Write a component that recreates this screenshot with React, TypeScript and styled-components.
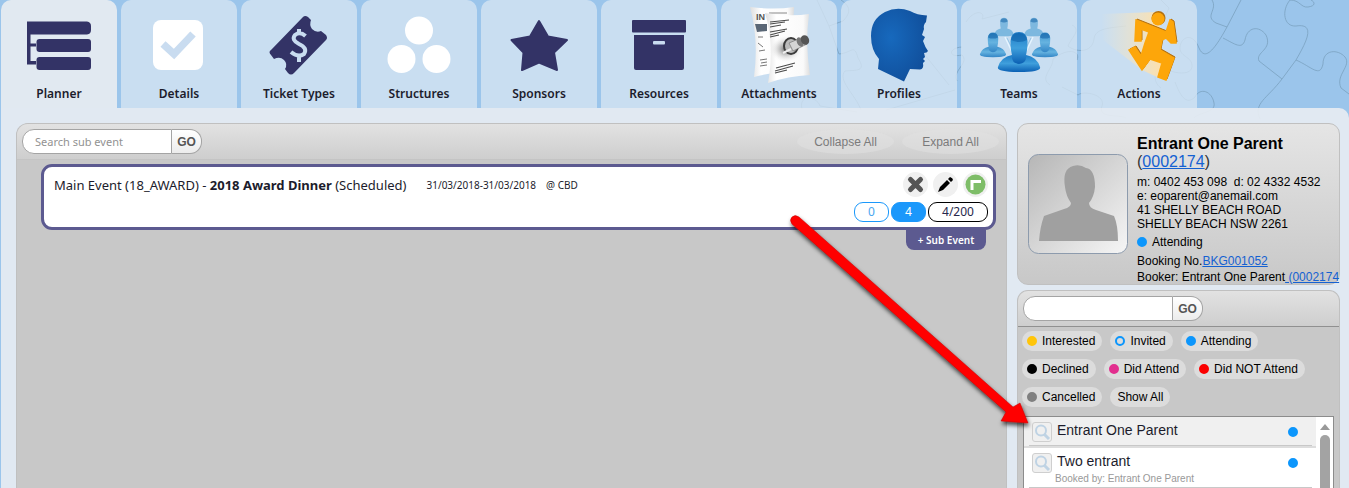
import React from 'react';
import styled, { createGlobalStyle } from 'styled-components';

const uiFont = `'Noto Sans', 'Open Sans', sans-serif`;
const textFont = `'Liberation Sans', Arial, sans-serif`;

const Global = createGlobalStyle`
  *, *::before, *::after { box-sizing: border-box; }
  body { margin: 0; font-family: ${textFont}; font-size: 12px; color: #000; }
  ul { list-style: none; margin: 0; padding: 0; }
  h2, p { margin: 0; }
  button, input { font: inherit; color: inherit; margin: 0; }
  button { cursor: pointer; }
`;

const Page = styled.div`
  position: relative;
  display: flex;
  flex-direction: column;
  height: 100vh;
  overflow: hidden;
  padding-left: 1px;
  background: #9bc5eb;
`;

const Backdrop = styled.svg`
  position: absolute;
  top: 0;
  right: 0;
`;

const TabBar = styled.nav`
  position: relative;
  display: flex;
  gap: 4px;
`;

const Tab = styled.a<{ $active?: boolean }>`
  display: flex;
  flex-direction: column;
  align-items: center;
  width: 116px;
  height: 108px;
  border-radius: 10px 10px 0 0;
  background: ${(p) => (p.$active ? '#e1e9f1' : 'rgba(216, 230, 243, 0.76)')};
  color: #1c1c2c;
  font: 600 12px/20px ${uiFont};
  text-decoration: none;
  svg { width: 100px; height: 84px; }
`;

const Body = styled.main`
  position: relative;
  display: flex;
  flex: 1;
  min-height: 0;
  gap: 10px;
  padding: 15px 9px 0 15px;
  border-radius: 0 10px 0 0;
  background: rgba(230, 236, 242, 0.93);
`;

const Planner = styled.section`
  flex: 1;
  min-width: 0;
  border: 1px solid #c0c0c0;
  border-bottom: 0;
  border-radius: 12px 12px 0 0;
  background: #c8c8c8;
  overflow: hidden;
`;

const PanelBar = styled.div<{ $line: string }>`
  display: flex;
  align-items: center;
  justify-content: space-between;
  flex: none;
  height: 36px;
  padding: 0 5px;
  border-bottom: 1px solid ${(p) => p.$line};
  background: linear-gradient(#e2e2e2, #cecece);
`;

const Search = styled.form`
  display: flex;
  height: 25px;
`;

const SearchInput = styled.input`
  width: 150px;
  padding: 0 12px;
  border: 1px solid #a4a4a4;
  border-radius: 12px 0 0 12px;
  background: #fff;
  font: 11px ${uiFont};
  outline: 0;
  &::placeholder { color: #929292; opacity: 1; }
`;

const GoButton = styled.button`
  width: 30px;
  padding: 0;
  border: 1px solid #a4a4a4;
  border-left: 0;
  border-radius: 0 12px 12px 0;
  background: linear-gradient(#fff, #ececec);
  color: #555;
  font: bold 12px ${textFont};
`;

const Links = styled.div`
  display: flex;
  gap: 8px;
  padding-right: 2px;
`;

const SoftButton = styled.button`
  width: 97px;
  height: 25px;
  padding: 0;
  border: 0;
  border-radius: 50%;
  background: rgba(225, 225, 225, 0.5);
  color: #7b7b7b;
  font-size: 12px;
`;

const EventArea = styled.div`
  padding: 4px 10px 0 24px;
`;

const EventCard = styled.article`
  display: flex;
  justify-content: space-between;
  height: 66px;
  padding: 5px 5px 0 10px;
  border: 3px solid #5c5a90;
  border-radius: 11px;
  background: #fff;
  color: #1c1c2c;
  font: 12px/16px ${uiFont};
`;

const EventTitle = styled.div`
  display: flex;
  gap: 20px;
  height: 26px;
  align-items: center;
  font-size: 13px;
  white-space: nowrap;
`;

const EventDetail = styled.div`
  display: flex;
  gap: 10px;
  font-size: 10px;
`;

const EventSide = styled.div`
  display: flex;
  flex-direction: column;
  align-items: flex-end;
  gap: 5px;
`;

const Row = styled.div<{ $gap: number }>`
  display: flex;
  gap: ${(p) => p.$gap}px;
`;

const RoundButton = styled.button`
  display: block;
  width: 25px;
  height: 25px;
  padding: 0;
  border: 0;
  border-radius: 50%;
  background: #f0f0f0;
  svg { display: block; }
`;

const Count = styled.span<{ $tone: 'empty' | 'full' | 'total' }>`
  width: ${(p) => (p.$tone === 'total' ? 60 : 35)}px;
  height: 20px;
  border: 1px solid ${(p) => (p.$tone === 'total' ? '#000' : '#1b98fb')};
  border-radius: 9px;
  background: ${(p) => (p.$tone === 'full' ? '#1b98fb' : '#fff')};
  color: ${(p) => ({ empty: '#4ba6f0', full: '#fff', total: '#28284c' })[p.$tone]};
  line-height: 18px;
  text-align: center;
`;

const SubEvent = styled.button`
  display: block;
  width: 80px;
  height: 20px;
  margin: 0 10px 0 auto;
  padding: 0;
  border: 0;
  border-radius: 0 0 8px 8px;
  background: #5c5a90;
  color: #fff;
  font: 600 10px/20px ${uiFont};
`;

const Sidebar = styled.aside`
  display: flex;
  flex-direction: column;
  flex: 0 0 323px;
  min-width: 0;
  gap: 5px;
`;

const Profile = styled.section`
  display: flex;
  flex: 0 0 161px;
  gap: 9px;
  padding: 10px 0 0 10px;
  border: 1px solid #c0c0c0;
  border-radius: 11px;
  background: linear-gradient(#e5e5e5, #c8c8c8);
`;

const Avatar = styled.svg`
  flex: none;
  margin-top: 20px;
`;

const ProfileText = styled.div`
  font-size: 12px;
  line-height: 14px;
  white-space: nowrap;
  a { color: #1461d2; }
`;

const ProfileName = styled.h2`
  font-size: 16px;
  line-height: 20px;
`;

const ProfileId = styled.p`
  margin-bottom: 5px;
  font-size: 16px;
  line-height: 16px;
  color: #333;
`;

const BookLine = styled.p`
  margin-top: 2px;
`;

const Status = styled.p`
  display: flex;
  align-items: center;
  gap: 5px;
  margin: 4px 0 5px;
`;

const Dot = styled.i<{ $color: string; $ring?: boolean }>`
  flex: none;
  width: 10px;
  height: 10px;
  border-radius: 50%;
  border: ${(p) => (p.$ring ? 2 : 5)}px solid ${(p) => p.$color};
`;

const Entrants = styled.section`
  display: flex;
  flex: 1;
  flex-direction: column;
  min-height: 0;
  border: 1px solid #c0c0c0;
  border-bottom: 0;
  border-radius: 11px 11px 0 0;
  background: #c8c8c8;
  overflow: hidden;
`;

const Filters = styled.div`
  display: flex;
  flex-wrap: wrap;
  gap: 8px;
  padding: 4px 10px 9px 4px;
`;

const Filter = styled.button`
  display: flex;
  align-items: center;
  gap: 5px;
  height: 20px;
  padding: 0 7px 0 5px;
  border: 0;
  border-radius: 10px;
  background: #dcdcdc;
  font-size: 12px;
  &:last-child { padding-left: 7px; }
`;

const ListBox = styled.div`
  display: flex;
  flex: 1;
  min-height: 0;
  margin: 0 5px;
  border: 1px solid #8c8c8c;
  border-bottom: 0;
  background: #fff;
`;

const List = styled.ul`
  flex: 1;
`;

const Entrant = styled.li<{ $selected?: boolean }>`
  height: ${(p) => (p.$selected ? 31 : 40)}px;
  padding: 0 4px 0 5px;
  background: ${(p) => (p.$selected ? '#f0f0f0' : '#fff')};
  border-bottom: ${(p) => (p.$selected ? '2px solid #ddd' : '0')};
`;

const EntrantInner = styled.div`
  height: 100%;
  border-bottom: 1px solid #c8c8c8;
`;

const EntrantLine = styled.div`
  display: flex;
  align-items: center;
  gap: 5px;
  height: 29px;
  padding: 0 14px 0 3px;
  color: #1c1c2c;
  font-size: 14px;
  span { flex: 1; padding-bottom: 3px; }
`;

const Lens = styled.button`
  width: 20px;
  height: 20px;
  padding: 0;
  border: 1px solid #cfcfcf;
  border-radius: 3px;
  background: #f0f0f0;
  svg { display: block; }
`;

const BookedBy = styled.p`
  margin-top: -3px;
  padding-left: 26px;
  color: #999;
  font-size: 10px;
  line-height: 10px;
`;

const Track = styled.div`
  display: flex;
  flex-direction: column;
  align-items: center;
  gap: 5px;
  width: 17px;
  padding-top: 7px;
`;

const Thumb = styled.div`
  flex: 1;
  width: 10px;
  border-radius: 5px 5px 0 0;
  background: #a3a3a3;
`;

const Pointer = styled.svg`
  position: absolute;
  top: 100px;
  right: 309px;
  pointer-events: none;
`;

const navy = '#333366';

const PlannerIcon = () => (
  <svg viewBox="0 0 100 84" fill={navy}>
    <path d="M18 21.500H78Q82 22 82 26V30Q82 34 78 34.500H21.500V43.500H27V46.500H21.500V61H27V64.500H18Z" />
    <rect x="27.500" y="39" width="54.500" height="13" rx="3" />
    <rect x="27.500" y="57" width="54.500" height="13" rx="3" />
  </svg>
);

const DetailsIcon = () => (
  <svg viewBox="0 0 100 84">
    <rect x="24" y="20" width="50" height="50" rx="8" fill="#fff" />
    <path d="M34 44L45 54L64 34" fill="none" stroke="#c9dcf0" strokeWidth="7.500" />
  </svg>
);

const TicketIcon = () => (
  <svg viewBox="0 0 100 84">
    <path d="M54 17Q56 15 59 17L62 20Q60 25 63 29Q67 33 72 31L77 35Q79 38 77 40L45 73Q42 76 39 73L36 69Q39 64 35 60Q31 56 25 59L22 55Q19 52 22 50Z" fill={navy} />
    <path d="M56.500 36Q51 31 46 35Q42 40 50 44Q59 48 55 54Q49 58 42 52M50 29V34M50 56V62" fill="none" stroke="#c9dcf0" strokeWidth="4" />
  </svg>
);

const StructuresIcon = () => (
  <svg viewBox="0 0 100 84" fill="#fff">
    <circle cx="50" cy="30.500" r="14" />
    <circle cx="32.500" cy="59" r="14" />
    <circle cx="67.500" cy="59" r="14" />
  </svg>
);

const SponsorsIcon = () => (
  <svg viewBox="0 0 100 84" fill={navy} stroke={navy} strokeWidth="2" strokeLinejoin="round">
    <path d="M50 21L59 36.500L78 40L65 52.500L68 70L50 62.500L33 70L34.500 52.500L22.500 40L41 36.500Z" />
  </svg>
);

const ResourcesIcon = () => (
  <svg viewBox="0 0 100 84" fill={navy}>
    <rect x="23" y="20" width="54" height="12.500" rx="1" />
    <path d="M25 35H75V68Q75 70 73 70H27Q25 70 25 68Z" />
    <rect x="44" y="41" width="12" height="3.500" rx="1" fill="#c9dcf0" />
  </svg>
);

const AttachmentsIcon = () => (
  <svg viewBox="0 0 100 84">
    <defs>
      <linearGradient id="sheet"><stop stopColor="#dedede" /><stop offset=".25" stopColor="#fff" /><stop offset=".85" stopColor="#fafafa" /><stop offset="1" stopColor="#ddd" /></linearGradient>
      <radialGradient id="shade"><stop stopColor="#666" /><stop offset="1" stopColor="#fff" stopOpacity="0" /></radialGradient>
    </defs>
    <path d="M21 7Q45 10 65 7Q63 40 65 70Q45 72 25 77Q30 40 21 7Z" fill="url(#sheet)" />
    <text x="27" y="20" fontSize="9" fontWeight="700" fontFamily="Liberation Sans" fill="#555">IN</text>
    <path d="M40 13H58" stroke="#888" />
    <path d="M26 24H38V31L28 32Z" fill="#596675" />
    <path d="M29 37H34M29 43L34 47M30 51L36 50M31 60L38 59M32 63L38 62M31 66L38 65" stroke="#777" />
    <path d="M36 13Q62 17 80 14Q76 43 81 75Q59 76 39 83Q46 45 36 13Z" fill="url(#sheet)" />
    <path d="M41 22L60 20M41 24L56 22M41 27L52 25M41 32L58 29M41 35L56 31M41 37L50 35M47 68L66 63M46 71L64 66M46 73L58 70" stroke="#4c4c4c" strokeWidth="1.200" />
    <ellipse cx="57" cy="49" rx="17" ry="14" fill="url(#shade)" />
    <ellipse cx="62" cy="46" rx="7" ry="8" fill="#bbb" stroke="#3c3c3c" strokeWidth="2" />
    <path d="M60 43L74 37L78 44L64 51Z" fill="#d5d5d5" stroke="#777" strokeWidth=".7" />
    <ellipse cx="71" cy="42" rx="3" ry="5" fill="#777" transform="rotate(-25 71 42)" />
    <ellipse cx="76" cy="40" rx="4" ry="5" fill="#555" transform="rotate(-25 76 40)" />
    <path d="M62 49L54 53" stroke="#eee" strokeWidth="2" />
  </svg>
);

const ProfilesIcon = () => (
  <svg viewBox="0 0 100 84">
    <defs><radialGradient id="head" cx=".35" cy=".4" r=".7"><stop stopColor="#1769bd" /><stop offset="1" stopColor="#104e9a" /></radialGradient></defs>
    <path d="M29 69L30 59Q22 50 22 36Q22 19 36 12Q48 6 61 11Q68 15 78 15.500L77 22Q74 25 75 29L73 35L76 37L74 41Q76 47 79 51Q78 53 75 53L76 57L74 59L76 61L74 63Q75 69 71 69.500L61 69L55 81.500Z" fill="url(#head)" />
  </svg>
);

const Person = ({ x, y, s, fill }: { x: number; y: number; s: number; fill: string }) => (
  <g transform={`translate(${x} ${y}) scale(${s})`}>
    <path d="M-7 14Q-18 16-21 26Q-23 31 0 31Q23 31 21 26Q18 16 7 14Z" fill={fill} />
    <path d="M-8.500 0Q-8-9 0-9Q8-9 8.500 0Q8.500 9 7 14Q8 22 0 23Q-8 22-7 14Q-8.500 9-8.500 0Z" fill={fill} />
    <path d="M-8-1Q-7-8 0-8Q7-8 8-1Q0 3-8-1Z" fill="#0758a0" opacity=".5" />
  </g>
);

const TeamsIcon = () => (
  <svg viewBox="0 0 100 84">
    <defs>
      <linearGradient id="body" x2="0" y2="1"><stop stopColor="#1f7cc6" /><stop offset=".5" stopColor="#3f9fdc" /><stop offset="1" stopColor="#0a5fb3" /></linearGradient>
      <linearGradient id="side" x2="0" y2="1"><stop stopColor="#3a8fcb" /><stop offset=".5" stopColor="#66b3e0" /><stop offset="1" stopColor="#3285c6" /></linearGradient>
    </defs>
    <Person x={35} y={22} s={0.46} fill="#7db8df" />
    <Person x={65} y={22} s={0.46} fill="#7db8df" />
    <path d="M36 37L46 58M64 37L54 58" stroke="#e5f4ff" strokeWidth="1.500" />
    <path d="M38 38L47 56M62 38L53 56" stroke="#7db8df" strokeWidth=".7" />
    <Person x={24} y={38} s={0.62} fill="url(#side)" />
    <Person x={76} y={38} s={0.62} fill="url(#side)" />
    <Person x={50} y={41} s={1} fill="url(#body)" />
  </svg>
);

const runner = 'M47 20L77 32L81 20L84 22L87 43L82 43L77 38L73 40L71 50L85 58L77 80L69 77L73 63L61 59L53 70L40 50L46 47L52 56L56 43L60 32L52 29L52 41L46 41Z';

const ActionsIcon = () => (
  <svg viewBox="0 0 100 84">
    <defs><linearGradient id="trail"><stop stopColor="#ffe9c0" stopOpacity="0" /><stop offset="1" stopColor="#ffe0a8" /></linearGradient></defs>
    <path d="M12 14L69 12L75 66L68 77L53 70L14 40Z" fill="url(#trail)" />
    <path fill="#b37010" stroke="#b37010" transform="translate(1 -1)" d={runner} />
    <path fill="#fda60a" stroke="#fda60a" strokeWidth="1.500" d={runner} />
    <circle cx="69.500" cy="18" r="7" fill="#b37010" />
    <circle cx="69" cy="19" r="6.500" fill="#fda60a" />
  </svg>
);

const tabs: [string, () => React.ReactElement][] = [
  ['Planner', PlannerIcon],
  ['Details', DetailsIcon],
  ['Ticket Types', TicketIcon],
  ['Structures', StructuresIcon],
  ['Sponsors', SponsorsIcon],
  ['Resources', ResourcesIcon],
  ['Attachments', AttachmentsIcon],
  ['Profiles', ProfilesIcon],
  ['Teams', TeamsIcon],
  ['Actions', ActionsIcon],
];

const filters = [
  ['Interested', '#ffc50a'],
  ['Invited', '#0c96fc'],
  ['Attending', '#0c96fc'],
  ['Declined', '#000'],
  ['Did Attend', '#e22e8e'],
  ['Did NOT Attend', '#fb0000'],
  ['Cancelled', '#808080'],
  ['Show All', ''],
];

const LensIcon = () => (
  <svg width="18" height="18" fill="none" stroke="#bfd3e4" strokeWidth="2">
    <circle cx="8" cy="7.500" r="5" />
    <path d="M11 11L16 16" strokeWidth="3" />
  </svg>
);

export default function App() {
  return (
    <Page>
      <Global />
      <Backdrop width="560" height="150" viewBox="789 0 560 150" fill="none" stroke="#789fbc" strokeOpacity=".75">
        <path d="M1212 0C1218 10 1204 16 1216 23L1227 27L1241 0M1227 27C1215 49 1205 62 1199 48C1194 35 1185 35 1181 43C1176 57 1191 55 1192 65C1193 77 1172 74 1160 66C1152 75 1155 84 1161 88" />
        <path d="M1223 38C1235 44 1242 50 1245 40C1247 27 1259 25 1266 35C1273 50 1255 52 1259 61L1282 79L1296 60M1290 0C1281 11 1284 27 1296 26C1316 23 1307 41 1296 60C1312 67 1320 78 1323 64C1323 49 1338 49 1345 57C1352 66 1335 75 1341 88L1349 94M1282 79C1267 99 1253 103 1260 119" />
        <path d="M1290 0C1300 0 1301 8 1308 7C1316 6 1315 2 1311 0M1175 82C1180 95 1186 106 1195 97C1200 87 1212 91 1214 103C1216 113 1199 112 1194 118" />
        <path d="M1161 0L1169 8L1161 26M1072 25C1082 30 1071 38 1068 46C1075 52 1092 54 1094 39C1095 28 1110 28 1126 26M1062 87L1078 95C1084 90 1106 95 1102 106C1097 119 1120 114 1126 118" />
        <path d="M817 0L829 26L843 21C855 9 845 3 841 0M829 26L839 54C852 53 854 43 858 58C867 72 856 70 845 71C837 80 855 94 861 110M917 45L949 85M886 110L955 90M957 81C952 70 970 63 962 55C948 58 948 48 962 47" />
        <path d="M966 22C975 8 986 12 982 19L1009 12M1050 85C1039 78 1053 69 1053 59C1068 47 1081 51 1077 60M802 109C798 94 817 96 820 106L857 112" />
      </Backdrop>
      <TabBar>
        {tabs.map(([label, Icon], i) => (
          <Tab key={label} href="#" $active={i === 0}>
            <Icon />
            {label}
          </Tab>
        ))}
      </TabBar>
      <Body>
        <Planner>
          <PanelBar $line="#c4c4c4">
            <Search>
              <SearchInput aria-label="Search sub event" placeholder="Search sub event" />
              <GoButton type="button">GO</GoButton>
            </Search>
            <Links>
              <SoftButton>Collapse All</SoftButton>
              <SoftButton>Expand All</SoftButton>
            </Links>
          </PanelBar>
          <EventArea>
            <EventCard>
              <EventTitle>
                <span>Main Event (18_AWARD) - <b>2018 Award Dinner</b> (Scheduled)</span>
                <EventDetail>
                  <span>31/03/2018-31/03/2018</span>
                  <span>@ CBD</span>
                </EventDetail>
              </EventTitle>
              <EventSide>
                <Row $gap={5}>
                  <RoundButton aria-label="Delete">
                    <svg width="25" height="25" stroke="#555" strokeWidth="5" strokeLinecap="round"><path d="M7.500 7.500L17.500 17.500M17.500 7.500L7.500 17.500" /></svg>
                  </RoundButton>
                  <RoundButton aria-label="Edit">
                    <svg width="25" height="25"><path d="M5 20L7 15L14 8L17 11L10 18ZM15 7L17 5Q20 6 20 8L18 10Z" /></svg>
                  </RoundButton>
                  <RoundButton aria-label="Expand">
                    <svg width="25" height="25"><circle cx="12.500" cy="12.500" r="10" fill="#7ebd68" /><path d="M9 18V9.500H18" fill="none" stroke="#fff" strokeWidth="3" /></svg>
                  </RoundButton>
                </Row>
                <Row $gap={2}>
                  <Count $tone="empty">0</Count>
                  <Count $tone="full">4</Count>
                  <Count $tone="total">4/200</Count>
                </Row>
              </EventSide>
            </EventCard>
            <SubEvent>+ Sub Event</SubEvent>
          </EventArea>
        </Planner>
        <Sidebar>
          <Profile>
            <Avatar width="100" height="100">
              <defs><linearGradient id="avatar" x2="1" y2="1"><stop stopColor="#b6b6b6" /><stop offset="1" stopColor="#f6f6f6" /></linearGradient></defs>
              <rect x=".5" y=".5" width="99" height="99" rx="10" fill="url(#avatar)" stroke="#8d9bad" />
              <path d="M11 87Q12 73 16 62L36 55Q43 53 43 49Q38 42 37 33Q34 15 45 12Q52 10 58 14Q67 15 67 33Q66 43 61 49Q61 54 68 56L86 62Q90 71 90 87Z" fill="#a0a0a0" />
            </Avatar>
            <ProfileText>
              <ProfileName>Entrant One Parent</ProfileName>
              <ProfileId>(<a href="#">0002174</a>)</ProfileId>
              <p>m: 0402 453 098&nbsp; d: 02 4332 4532</p>
              <p>e: eoparent@anemail.com</p>
              <p>41 SHELLY BEACH ROAD</p>
              <p>SHELLY BEACH NSW 2261</p>
              <Status><Dot $color="#0c96fc" />Attending</Status>
              <BookLine>Booking No.<a href="#">BKG001052</a></BookLine>
              <BookLine>Booker: Entrant One Parent<a href="#">&nbsp;(0002174</a></BookLine>
            </ProfileText>
          </Profile>
          <Entrants>
            <PanelBar $line="#909090">
              <Search>
                <SearchInput aria-label="Search entrants" />
                <GoButton type="button">GO</GoButton>
              </Search>
            </PanelBar>
            <Filters>
              {filters.map(([label, color]) => (
                <Filter key={label}>
                  {color && <Dot $color={color} $ring={label === 'Invited'} />}
                  {label}
                </Filter>
              ))}
            </Filters>
            <ListBox>
              <List>
                <Entrant $selected>
                  <EntrantInner>
                    <EntrantLine>
                      <Lens aria-label="View Entrant One Parent"><LensIcon /></Lens>
                      <span>Entrant One Parent</span>
                      <Dot $color="#0c96fc" />
                    </EntrantLine>
                  </EntrantInner>
                </Entrant>
                <Entrant>
                  <EntrantInner>
                    <EntrantLine>
                      <Lens aria-label="View Two entrant"><LensIcon /></Lens>
                      <span>Two entrant</span>
                      <Dot $color="#0c96fc" />
                    </EntrantLine>
                    <BookedBy>Booked by: Entrant One Parent</BookedBy>
                  </EntrantInner>
                </Entrant>
              </List>
              <Track>
                <svg width="10" height="6" fill="#999"><path d="M0 6L5 0L10 6Z" /></svg>
                <Thumb />
              </Track>
            </ListBox>
          </Entrants>
        </Sidebar>
        <Pointer width="260" height="230" viewBox="780 208 260 230">
          <defs><filter id="drop" x="-.1" y="-.1" width="1.200" height="1.200"><feDropShadow dx="1" dy="3" stdDeviation="2" floodOpacity=".7" /></filter></defs>
          <g filter="url(#drop)" fill="#f00" stroke="#c00000" strokeWidth=".5">
            <path d="M792 224Q789 220 792 217Q795 214 799 217L1013 407L1020 403L1028 423L1001 421L1006 412Z" />
          </g>
        </Pointer>
      </Body>
    </Page>
  );
}
